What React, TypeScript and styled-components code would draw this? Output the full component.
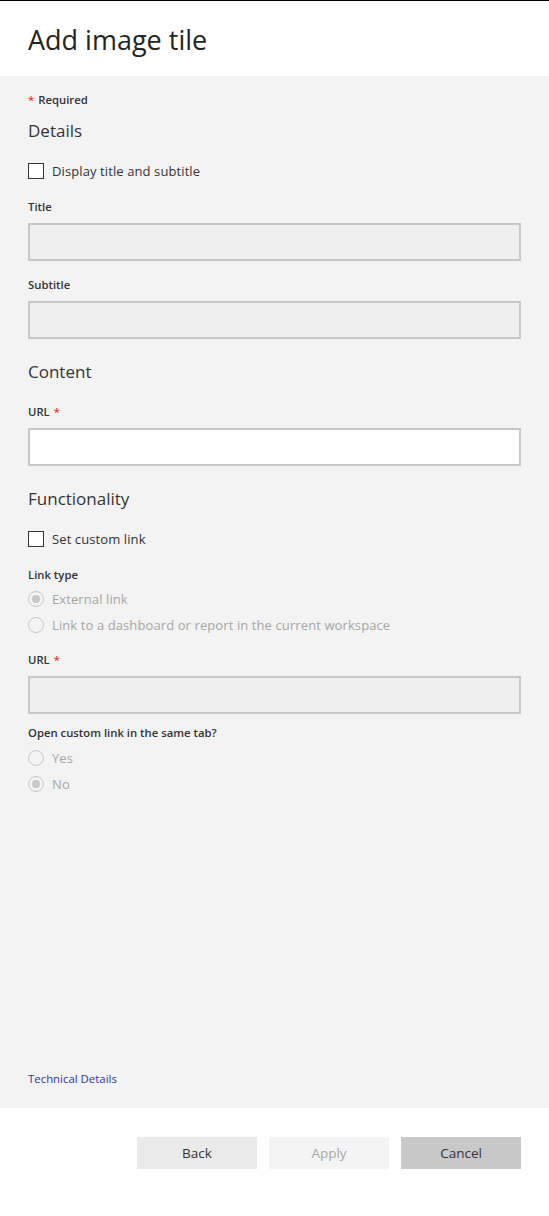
import React from "react";
import styled, { createGlobalStyle } from "styled-components";

const Global = createGlobalStyle`
  html, body { margin: 0; padding: 0; background: #ffffff; }
  body { font-family: "Open Sans", "Noto Sans", "Liberation Sans", sans-serif; color: #333333; }
  * { box-sizing: border-box; }
`;

const Page = styled.div`
  width: 549px;
  height: 1216px;
  display: flex;
  flex-direction: column;
  background: #ffffff;
`;

const Header = styled.header`
  height: 76px;
  border-top: 1px solid #000000;
  padding: 0 28px;
  display: flex;
  align-items: center;
  background: #ffffff;
`;

const Title = styled.h1`
  margin: 0;
  font-size: 27px;
  font-weight: 400;
  color: #252423;
  line-height: 36px;
  padding-top: 2px;
`;

const Body = styled.main`
  height: 1032px;
  background: #f3f3f3;
  padding: 16px 28px 21px;
  display: flex;
  flex-direction: column;
`;

const Required = styled.div`
  font-size: 11.3px;
  line-height: 16px;
  font-weight: 600;
  color: #333333;
`;

const Star = styled.span`
  color: #e81123;
  font-weight: 400;
  margin-right: 4px;
`;

const LabelStar = styled.span`
  color: #e81123;
  font-weight: 400;
  margin-left: 4px;
`;

const SectionTitle = styled.h2<{ $mt: number }>`
  margin: ${(p) => p.$mt}px 0 0;
  font-size: 17px;
  line-height: 24px;
  font-weight: 400;
  color: #333333;
`;

const CheckRow = styled.label<{ $mt: number }>`
  margin-top: ${(p) => p.$mt}px;
  display: flex;
  align-items: center;
  gap: 8px;
  height: 16px;
  font-size: 13px;
  letter-spacing: 0.1px;
  color: #333333;
`;

const Box = styled.span`
  width: 16px;
  height: 16px;
  border: 1px solid #333333;
  background: #ffffff;
  flex: none;
`;

const FieldLabel = styled.div<{ $mt: number }>`
  margin-top: ${(p) => p.$mt}px;
  font-size: 11.3px;
  line-height: 16px;
  font-weight: 600;
  color: #333333;
`;

const Input = styled.div<{ $enabled?: boolean; $mt: number }>`
  margin-top: ${(p) => p.$mt}px;
  height: 38px;
  width: 100%;
  border: 2px solid #c8c8c8;
  background: ${(p) => (p.$enabled ? "#ffffff" : "#efefef")};
`;

const RadioRow = styled.div<{ $mt: number }>`
  margin-top: ${(p) => p.$mt}px;
  height: 20px;
  display: flex;
  align-items: center;
  gap: 8px;
  font-size: 13px;
  letter-spacing: 0.1px;
  color: #a6a6a6;
`;

const Radio = styled.span<{ $checked?: boolean }>`
  width: 16px;
  height: 16px;
  border-radius: 50%;
  border: 1px solid #c8c8c8;
  flex: none;
  display: flex;
  align-items: center;
  justify-content: center;
  &::after {
    content: "";
    width: 8px;
    height: 8px;
    border-radius: 50%;
    background: ${(p) => (p.$checked ? "#c8c8c8" : "transparent")};
  }
`;

const TechLink = styled.a`
  margin-top: auto;
  font-size: 11.4px;
  line-height: 16px;
  color: #333399;
  text-decoration: none;
  align-self: flex-start;
`;

const Footer = styled.footer`
  flex: 1;
  background: #ffffff;
  padding: 29px 28px 0;
  display: flex;
  justify-content: flex-end;
  align-items: flex-start;
  gap: 12px;
`;

const Button = styled.button<{ $variant: "back" | "apply" | "cancel" }>`
  width: 120px;
  height: 32px;
  border: none;
  font-family: inherit;
  font-size: 13.5px;
  background: ${(p) =>
    p.$variant === "back" ? "#eaeaea" : p.$variant === "apply" ? "#f4f4f4" : "#c8c8c8"};
  color: ${(p) => (p.$variant === "apply" ? "#a6a6a6" : "#333333")};
`;

export default function App() {
  return (
    <Page>
      <Global />
      <Header>
        <Title>Add image tile</Title>
      </Header>
      <Body>
        <Required>
          <Star>*</Star>Required
        </Required>
        <SectionTitle $mt={11}>Details</SectionTitle>
        <CheckRow $mt={20}>
          <Box />
          Display title and subtitle
        </CheckRow>
        <FieldLabel $mt={20}>Title</FieldLabel>
        <Input $mt={8} />
        <FieldLabel $mt={16}>Subtitle</FieldLabel>
        <Input $mt={8} />
        <SectionTitle $mt={21}>Content</SectionTitle>
        <FieldLabel $mt={20}>
          URL<LabelStar>*</LabelStar>
        </FieldLabel>
        <Input $mt={8} $enabled />
        <SectionTitle $mt={21}>Functionality</SectionTitle>
        <CheckRow $mt={20}>
          <Box />
          Set custom link
        </CheckRow>
        <FieldLabel $mt={20}>Link type</FieldLabel>
        <RadioRow $mt={6}>
          <Radio $checked />
          External link
        </RadioRow>
        <RadioRow $mt={6}>
          <Radio />
          Link to a dashboard or report in the current workspace
        </RadioRow>
        <FieldLabel $mt={17}>
          URL<LabelStar>*</LabelStar>
        </FieldLabel>
        <Input $mt={8} />
        <FieldLabel $mt={11}>Open custom link in the same tab?</FieldLabel>
        <RadioRow $mt={7}>
          <Radio />
          Yes
        </RadioRow>
        <RadioRow $mt={6}>
          <Radio $checked />
          No
        </RadioRow>
        <TechLink href="#">Technical Details</TechLink>
      </Body>
      <Footer>
        <Button $variant="back">Back</Button>
        <Button $variant="apply">Apply</Button>
        <Button $variant="cancel">Cancel</Button>
      </Footer>
    </Page>
  );
}
